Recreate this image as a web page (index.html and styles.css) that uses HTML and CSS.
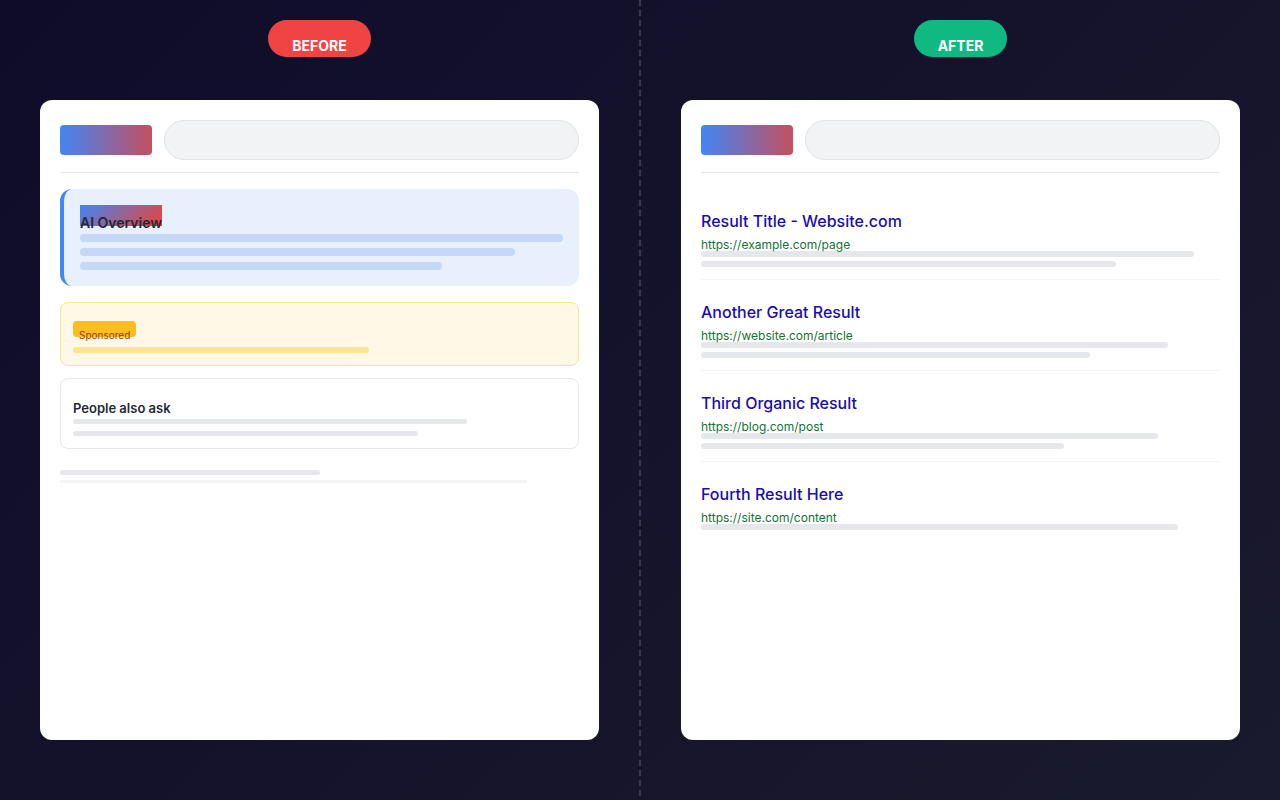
FILE: index.html
```html
<!DOCTYPE html>
<html lang="en">
<head>
  <meta charset="UTF-8" />
  <title>Search results: before and after</title>
  <meta name="viewport" content="width=device-width, initial-scale=1.0"/>
  <link rel="stylesheet" href="styles.css">
</head>
<body>

  <main class="comparison">
    <section class="panel">
      <div class="badge badge-before">BEFORE</div>

      <div class="browser">
        <div class="search-header">
          <div class="logo"></div>
          <input type="text" class="search-box" aria-label="Search" />
        </div>

        <div class="ai-overview">
          <h2 class="ai-label">AI Overview</h2>
          <div class="ai-line"></div>
          <div class="ai-line w-90"></div>
          <div class="ai-line w-75"></div>
        </div>

        <div class="sponsored">
          <span class="sponsored-tag">Sponsored</span>
          <div class="sponsored-line w-60"></div>
        </div>

        <div class="people-ask">
          <h2 class="people-ask-title">People also ask</h2>
          <div class="ask-line w-80"></div>
          <div class="ask-line w-70"></div>
        </div>

        <div class="buried">
          <div class="buried-title w-50"></div>
          <div class="buried-line w-90"></div>
        </div>
      </div>
    </section>

    <div class="divider"></div>

    <section class="panel">
      <div class="badge badge-after">AFTER</div>

      <div class="browser">
        <div class="search-header">
          <div class="logo"></div>
          <input type="text" class="search-box" aria-label="Search" />
        </div>

        <article class="result">
          <a href="#" class="result-title">Result Title - Website.com</a>
          <div class="result-url">https://example.com/page</div>
          <div class="result-line w-95"></div>
          <div class="result-line w-80"></div>
        </article>

        <article class="result">
          <a href="#" class="result-title">Another Great Result</a>
          <div class="result-url">https://website.com/article</div>
          <div class="result-line w-90"></div>
          <div class="result-line w-75"></div>
        </article>

        <article class="result">
          <a href="#" class="result-title">Third Organic Result</a>
          <div class="result-url">https://blog.com/post</div>
          <div class="result-line w-88"></div>
          <div class="result-line w-70"></div>
        </article>

        <article class="result">
          <a href="#" class="result-title">Fourth Result Here</a>
          <div class="result-url">https://site.com/content</div>
          <div class="result-line w-92"></div>
        </article>
      </div>
    </section>
  </main>

</body>
</html>
```
FILE: styles.css
```css
* {
  box-sizing: border-box;
  margin: 0;
  padding: 0;
}

body {
  font-family: Inter, 'Liberation Sans', sans-serif;
  background: #14112a;
}

.comparison {
  display: flex;
  min-height: 100vh;
  background: linear-gradient(135deg, #0f0c29, #1a1a2e);
}

.panel {
  flex: 1;
  display: flex;
  flex-direction: column;
  align-items: center;
  padding: 20px 40px 60px;
}

.divider {
  width: 2px;
  background: repeating-linear-gradient(to bottom, #3a394b 0 6px, transparent 6px 10px);
}

.badge {
  padding: 17px 24px 3px;
  margin-bottom: 43px;
  border-radius: 20px;
  color: white;
  font-size: 14px;
  font-weight: 700;
  line-height: 17px;
}

.badge-before {
  background-color: #ef4444;
}

.badge-after {
  background-color: #10b981;
}

.browser {
  flex: 1;
  width: 100%;
  padding: 20px;
  background-color: white;
  border-radius: 12px;
}

.search-header {
  display: flex;
  align-items: center;
  gap: 12px;
  padding-bottom: 12px;
  margin-bottom: 16px;
  border-bottom: 1px solid #e5e7eb;
}

.logo {
  width: 92px;
  height: 30px;
  border-radius: 4px;
  background: linear-gradient(90deg, #4285f4, #c4505f);
}

.search-box {
  flex: 1;
  min-width: 0;
  height: 40px;
  padding: 0 16px;
  border: 1px solid #dfe1e5;
  border-radius: 20px;
  background-color: #f1f3f4;
  font-family: inherit;
  font-size: 14px;
}

/* AI overview */
.ai-overview {
  display: flex;
  flex-direction: column;
  align-items: flex-start;
  gap: 6px;
  padding: 16px;
  margin-bottom: 16px;
  border-left: 4px solid #4285f4;
  border-radius: 12px;
  background-color: #e8f0fe;
}

.ai-label {
  height: 21px;
  padding-top: 9px;
  margin-bottom: 2px;
  background: linear-gradient(135deg, #4285f4, #ea4335);
  color: #1f2937;
  font-size: 14px;
  font-weight: 600;
  line-height: 17px;
}

.ai-line {
  width: 100%;
  height: 8px;
  border-radius: 4px;
  background-color: #c5d8f8;
}

/* Ads */
.sponsored {
  padding: 18px 12px 12px;
  margin-bottom: 12px;
  border: 1px solid #fde68a;
  border-radius: 8px;
  background-color: #fff8e6;
}

.sponsored-tag {
  display: block;
  width: fit-content;
  height: 16px;
  padding: 8px 6px 0;
  margin-bottom: 10px;
  border-radius: 4px;
  background-color: #fbbc24;
  color: #92400e;
  font-size: 10px;
  line-height: 12px;
}

.sponsored-line {
  height: 6px;
  border-radius: 3px;
  background-color: #fde68a;
}

/* People also ask */
.people-ask {
  display: flex;
  flex-direction: column;
  gap: 7px;
  padding: 21px 12px 12px;
  margin-bottom: 21px;
  border: 1px solid #e5e7eb;
  border-radius: 8px;
}

.people-ask-title {
  margin-bottom: -4px;
  color: #1f2937;
  font-size: 13px;
  font-weight: 600;
  line-height: 16px;
}

.ask-line,
.buried-title {
  height: 5px;
  border-radius: 3px;
  background-color: #e5e7eb;
}

.buried-line {
  height: 3px;
  margin-top: 5px;
  border-radius: 2px;
  background-color: #f3f4f6;
}

/* Organic results */
.result {
  padding: 22px 0 12px;
  border-bottom: 1px solid #f3f4f6;
}

.result:last-child {
  border-bottom: none;
}

.result-title {
  display: block;
  margin-bottom: 8px;
  color: #1a0dab;
  font-size: 16px;
  font-weight: 500;
  line-height: 20px;
  text-decoration: none;
}

.result-url {
  overflow: hidden;
  color: #137333;
  font-size: 12px;
  line-height: 14px;
  height: 14px;
  margin: -1px 0;
}

.result-line {
  height: 6px;
  border-radius: 3px;
  background-color: #e5e7eb;
}

.result-line + .result-line {
  margin-top: 4px;
}

.w-50 { width: 50%; }
.w-60 { width: 60%; }
.w-70 { width: 70%; }
.w-75 { width: 75%; }
.w-80 { width: 80%; }
.w-88 { width: 88%; }
.w-90 { width: 90%; }
.w-92 { width: 92%; }
.w-95 { width: 95%; }
```
